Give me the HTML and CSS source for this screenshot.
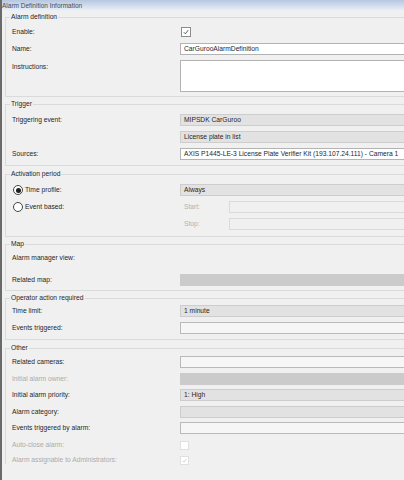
FILE: index.html
```html
<!DOCTYPE html>
<html>
<head>
<meta charset="utf-8">
<link rel="stylesheet" href="styles.css">
</head>
<body>
<div class="window">
  <div class="titlebar">Alarm Definition Information</div>

  <fieldset class="group g1">
    <legend>Alarm definition</legend>
    <div class="rows">
      <div class="row"><span class="label">Enable:</span><span class="cell"><span class="check"><svg viewBox="0 0 10 10" width="10" height="10"><polyline points="2.2,5.2 4.2,7.3 7.8,2.6" fill="none" stroke="#3a3a3a" stroke-width="1"/></svg></span></span></div>
      <div class="row"><span class="label">Name:</span><div class="field white">CarGurooAlarmDefinition</div></div>
      <div class="row tall"><span class="label top">Instructions:</span><div class="field white area"></div></div>
    </div>
  </fieldset>

  <fieldset class="group g2">
    <legend>Trigger</legend>
    <div class="rows">
      <div class="row"><span class="label">Triggering event:</span><div class="field combo">MIPSDK CarGuroo</div></div>
      <div class="row"><span class="label"></span><div class="field combo">License plate in list</div></div>
      <div class="row"><span class="label">Sources:</span><div class="field white">AXIS P1445-LE-3 License Plate Verifier Kit (193.107.24.111) - Camera 1</div></div>
    </div>
  </fieldset>

  <fieldset class="group g3">
    <legend>Activation period</legend>
    <div class="rows">
      <div class="row"><span class="label radio-label"><span class="radio on"></span>Time profile:</span><div class="field combo">Always</div></div>
      <div class="row"><span class="label radio-label"><span class="radio"></span>Event based:</span><div class="sub"><span class="sublabel">Start:</span><div class="field off"></div></div></div>
      <div class="row"><span class="label"></span><div class="sub"><span class="sublabel">Stop:</span><div class="field off"></div></div></div>
    </div>
  </fieldset>

  <fieldset class="group g4">
    <legend>Map</legend>
    <div class="rows">
      <div class="row"><span class="label">Alarm manager view:</span><span class="cell"></span></div>
      <div class="row mapgap"><span class="label">Related map:</span><div class="field dark"></div></div>
    </div>
  </fieldset>

  <fieldset class="group g5">
    <legend>Operator action required</legend>
    <div class="rows">
      <div class="row"><span class="label">Time limit:</span><div class="field combo">1 minute</div></div>
      <div class="row"><span class="label">Events triggered:</span><div class="field light"></div></div>
    </div>
  </fieldset>

  <fieldset class="group g6">
    <legend>Other</legend>
    <div class="rows">
      <div class="row"><span class="label">Related cameras:</span><div class="field light"></div></div>
      <div class="row"><span class="label dim">Initial alarm owner:</span><div class="field dark"></div></div>
      <div class="row"><span class="label">Initial alarm priority:</span><div class="field combo">1: High</div></div>
      <div class="row"><span class="label">Alarm category:</span><div class="field combo"></div></div>
      <div class="row"><span class="label">Events triggered by alarm:</span><div class="field light"></div></div>
      <div class="row small"><span class="label dim">Auto-close alarm:</span><span class="cell"><span class="check faint"></span></span></div>
      <div class="row small"><span class="label dim">Alarm assignable to Administrators:</span><span class="cell"><span class="check faint"><svg viewBox="0 0 10 10" width="9" height="9"><polyline points="2.2,5.2 4.2,7.3 7.8,2.6" fill="none" stroke="#c4c4c4" stroke-width="1"/></svg></span></span></div>
    </div>
  </fieldset>
</div>
</body>
</html>
```

FILE: styles.css
```css
* { box-sizing: border-box; }

html, body {
  margin: 0;
  padding: 0;
}

body {
  width: 404px;
  height: 480px;
  overflow: hidden;
  background: #f0f0f0;
  font-family: "Liberation Sans", Arial, sans-serif;
  font-size: 6.7px;
  color: #262626;
}

.window {
  width: 404px;
  height: 480px;
  overflow: hidden;
  border-left: 2px solid #6a6a6a;
}

.titlebar {
  height: 11px;
  line-height: 11px;
  margin-bottom: 1px;
  background: linear-gradient(#b7c7e0, #d6e0ef 60%, #eef2f7);
  color: #4a4a4a;
  font-size: 6.5px;
  white-space: nowrap;
}

.group {
  margin: 0 0 0 3px;
  padding: 0 0 0 6px;
  border: 1px solid #dadada;
  border-right: none;
  min-width: 0;
}

.group legend {
  height: 10px;
  line-height: 10px;
  padding: 0 1px;
  margin-left: -2px;
  font-size: 6.7px;
  color: #262626;
}

.g1 { margin-top: 0; padding-top: 4px; padding-bottom: 4px; }
.g2 { margin-top: 2px; padding-top: 5px; padding-bottom: 5px; }
.g3 { margin-top: 3px; padding-top: 5px; padding-bottom: 6px; }
.g4 { margin-top: 2px; padding-top: 3px; padding-bottom: 4px; }
.g5 { margin-top: 2px; padding-top: 2px; padding-bottom: 5px; }
.g6 { margin-top: 3px; padding-top: 3px; padding-bottom: 0; border-bottom: none; }

.rows {
  display: flex;
  flex-direction: column;
  gap: 5px;
}

.g6 .rows { gap: 4.5px; }

.row {
  display: grid;
  grid-template-columns: 168px 1fr;
  align-items: center;
  height: 12px;
}

.row.tall {
  height: 32px;
  align-items: start;
}

.row.small {
  height: 10px;
  margin-top: 0.5px;
}

.row.mapgap { margin-top: 5px; }

.label {
  line-height: 12px;
  white-space: nowrap;
  color: #262626;
}

.label.top { padding-top: 1px; }

.label.dim { color: #ababab; }

.radio-label {
  display: flex;
  align-items: center;
}

.radio {
  width: 10px;
  height: 10px;
  margin: 0 2px 0 1px;
  border: 1px solid #444;
  border-radius: 50%;
  background: #fff;
  display: flex;
  align-items: center;
  justify-content: center;
}

.radio.on::after {
  content: "";
  width: 5px;
  height: 5px;
  border-radius: 50%;
  background: #1f1f1f;
}

.cell {
  display: flex;
  align-items: center;
  height: 100%;
}

.check {
  width: 10px;
  height: 10px;
  margin-left: 1px;
  border: 1px solid #8c8c8c;
  background: #fff;
  display: flex;
  align-items: center;
  justify-content: center;
}

.check svg { display: block; }

.check.faint {
  width: 9px;
  height: 9px;
  margin-left: 0;
  border-color: #e0e0e0;
}

.field {
  height: 12px;
  line-height: 10px;
  padding-left: 3px;
  white-space: nowrap;
  overflow: hidden;
  color: #262626;
}

.field.white {
  background: #fff;
  border: 1px solid #b3b3b3;
  border-right: none;
}

.field.area { height: 32px; }

.field.combo {
  background: #e2e2e2;
  border: 1px solid #cdcdcd;
  border-right: none;
}

.field.light {
  background: #f6f6f6;
  border: 1px solid #bababa;
  border-right: none;
}

.field.dark {
  background: #cbcbcb;
}

.field.off {
  background: #f0f0f0;
  border: 1px solid #dadada;
  border-right: none;
}

.sub {
  display: grid;
  grid-template-columns: 49px 1fr;
  align-items: center;
  height: 12px;
}

.sublabel {
  padding-left: 4px;
  color: #b0b0b0;
  line-height: 12px;
}
```
